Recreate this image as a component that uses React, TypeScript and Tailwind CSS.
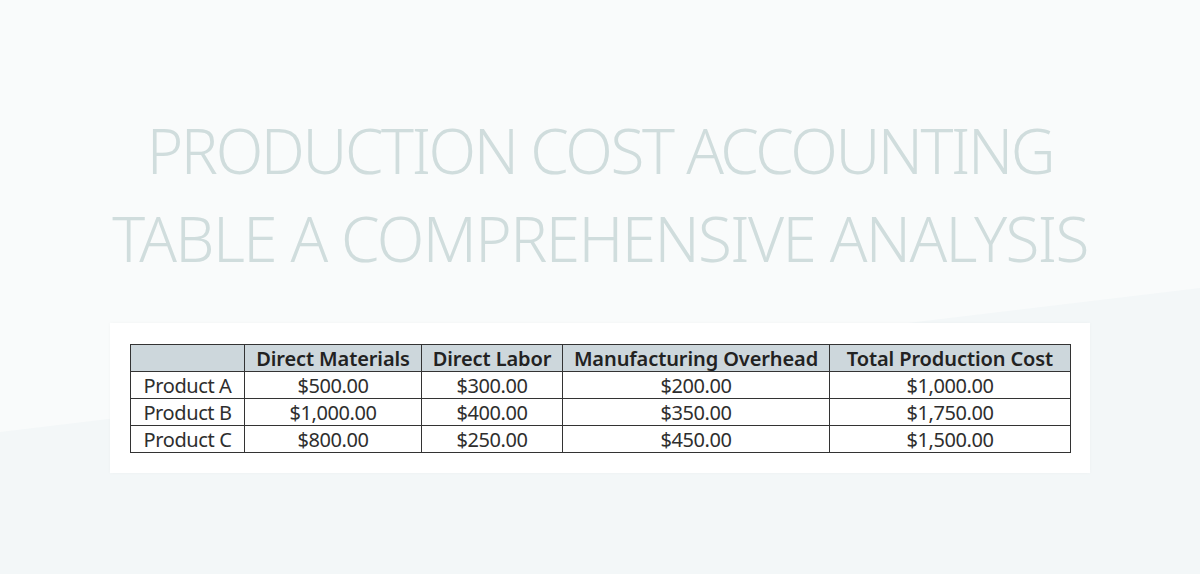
import React from "react";

const rows = [
  ["Product A", "$500.00", "$300.00", "$200.00", "$1,000.00"],
  ["Product B", "$1,000.00", "$400.00", "$350.00", "$1,750.00"],
  ["Product C", "$800.00", "$250.00", "$450.00", "$1,500.00"],
];
const heads = ["", "Direct Materials", "Direct Labor", "Manufacturing Overhead", "Total Production Cost"];
const widths = ["w-[114px]", "w-[177px]", "w-[141px]", "w-[267px]", "w-[241px]"];

export default function App() {
  return (
    <div className="relative w-[1200px] h-[574px] overflow-hidden bg-[#f9fbfb]" style={{ fontFamily: '"Noto Sans", sans-serif' }}>
      <svg className="absolute inset-0" width="1200" height="574" viewBox="0 0 1200 574" preserveAspectRatio="none">
        <polygon points="0,432 1200,288 1200,574 0,574" fill="#f3f7f8" />
      </svg>
      <div className="relative flex flex-col items-center">
        <div className="mt-[106px] flex flex-col items-center text-[#d0dddd] font-light text-[62px] leading-[88px]">
          <div className="tracking-[-2.4px]">PRODUCTION COST ACCOUNTING</div>
          <div className="tracking-[-1.6px]">TABLE A COMPREHENSIVE ANALYSIS</div>
        </div>
        <div className="mt-[41px] w-[980px] h-[150px] bg-white pt-[21px] pl-[20px] shadow-[0_0_4px_rgba(0,0,0,0.03)]">
          <table className="border-collapse text-[#2e2e2e] text-[20px] tracking-[-0.4px]">
            <thead>
              <tr className="bg-[#cdd7dc] h-[27px]">
                {heads.map((h, i) => (
                  <th key={i} className={`${widths[i]} border border-[#333] p-0 font-semibold text-[#222] leading-[25px] text-center tracking-[-0.1px]`}>{h}</th>
                ))}
              </tr>
            </thead>
            <tbody>
              {rows.map((r, ri) => (
                <tr key={ri} className="h-[27px]">
                  {r.map((c, ci) => (
                    <td key={ci} className={`${widths[ci]} border border-[#333] p-0 leading-[25px] text-center font-normal`}>{c}</td>
                  ))}
                </tr>
              ))}
            </tbody>
          </table>
        </div>
      </div>
    </div>
  );
}
